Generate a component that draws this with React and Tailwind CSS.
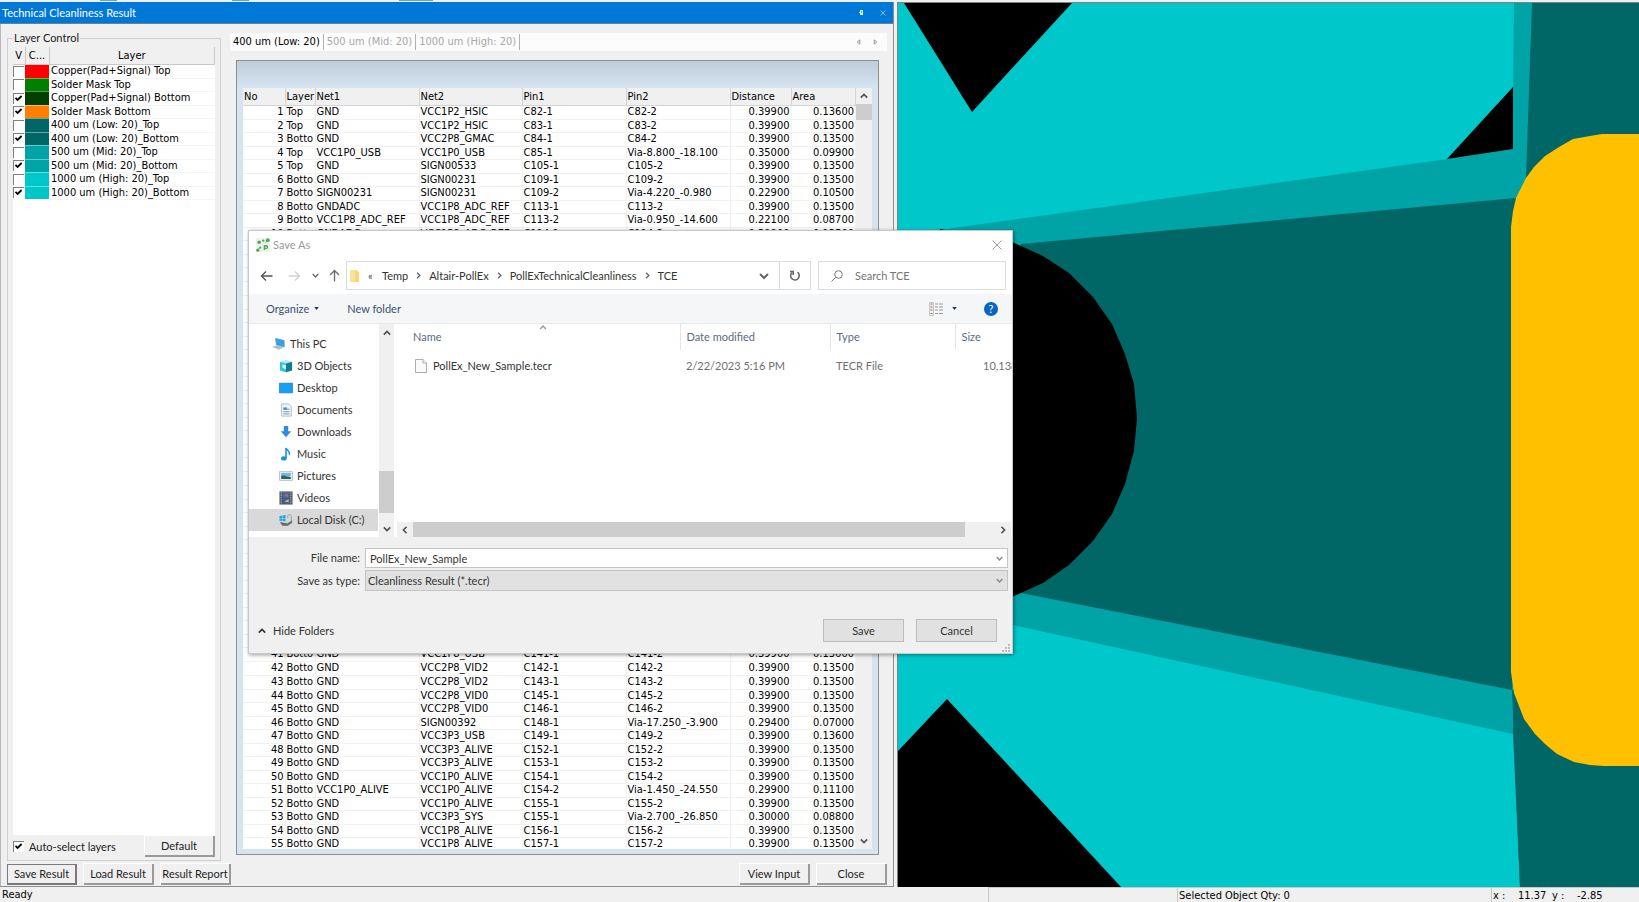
import React, { useState } from "react";
import clsx from "clsx";

const layers = [
  { name: "Copper(Pad+Signal) Top", color: "bg-[#ff0000]", on: false },
  { name: "Solder Mask Top", color: "bg-[#008000]", on: false },
  { name: "Copper(Pad+Signal) Bottom", color: "bg-[#004000]", on: true },
  { name: "Solder Mask Bottom", color: "bg-[#ff8000]", on: true },
  { name: "400 um (Low: 20)_Top", color: "bg-[#006666]", on: false },
  { name: "400 um (Low: 20)_Bottom", color: "bg-[#006666]", on: true },
  { name: "500 um (Mid: 20)_Top", color: "bg-[#00a4a6]", on: false },
  { name: "500 um (Mid: 20)_Bottom", color: "bg-[#00a4a6]", on: true },
  { name: "1000 um (High: 20)_Top", color: "bg-[#00c8ca]", on: false },
  { name: "1000 um (High: 20)_Bottom", color: "bg-[#00c8ca]", on: true },
];

const tabs = ["400 um (Low: 20)", "500 um (Mid: 20)", "1000 um (High: 20)"];

const results = {
  1: ["Top", "GND", "VCC1P2_HSIC", "C82-1", "C82-2", "0.39900", "0.13600"],
  2: ["Top", "GND", "VCC1P2_HSIC", "C83-1", "C83-2", "0.39900", "0.13500"],
  3: ["Botto", "GND", "VCC2P8_GMAC", "C84-1", "C84-2", "0.39900", "0.13500"],
  4: ["Top", "VCC1P0_USB", "VCC1P0_USB", "C85-1", "Via-8.800_-18.100", "0.35000", "0.09900"],
  5: ["Top", "GND", "SIGN00533", "C105-1", "C105-2", "0.39900", "0.13500"],
  6: ["Botto", "GND", "SIGN00231", "C109-1", "C109-2", "0.39900", "0.13500"],
  7: ["Botto", "SIGN00231", "SIGN00231", "C109-2", "Via-4.220_-0.980", "0.22900", "0.10500"],
  8: ["Botto", "GNDADC", "VCC1P8_ADC_REF", "C113-1", "C113-2", "0.39900", "0.13500"],
  9: ["Botto", "VCC1P8_ADC_REF", "VCC1P8_ADC_REF", "C113-2", "Via-0.950_-14.600", "0.22100", "0.08700"],
  10: ["Botto", "GNDADC", "VCC1P8_ADC_REF", "C114-1", "C114-2", "0.39900", "0.13500"],
  41: ["Botto", "GND", "VCC1P8_USB", "C141-1", "C141-2", "0.39900", "0.13600"],
  42: ["Botto", "GND", "VCC2P8_VID2", "C142-1", "C142-2", "0.39900", "0.13500"],
  43: ["Botto", "GND", "VCC2P8_VID2", "C143-1", "C143-2", "0.39900", "0.13500"],
  44: ["Botto", "GND", "VCC2P8_VID0", "C145-1", "C145-2", "0.39900", "0.13500"],
  45: ["Botto", "GND", "VCC2P8_VID0", "C146-1", "C146-2", "0.39900", "0.13500"],
  46: ["Botto", "GND", "SIGN00392", "C148-1", "Via-17.250_-3.900", "0.29400", "0.07000"],
  47: ["Botto", "GND", "VCC3P3_USB", "C149-1", "C149-2", "0.39900", "0.13600"],
  48: ["Botto", "GND", "VCC3P3_ALIVE", "C152-1", "C152-2", "0.39900", "0.13500"],
  49: ["Botto", "GND", "VCC3P3_ALIVE", "C153-1", "C153-2", "0.39900", "0.13500"],
  50: ["Botto", "GND", "VCC1P0_ALIVE", "C154-1", "C154-2", "0.39900", "0.13500"],
  51: ["Botto", "VCC1P0_ALIVE", "VCC1P0_ALIVE", "C154-2", "Via-1.450_-24.550", "0.29900", "0.11100"],
  52: ["Botto", "GND", "VCC1P0_ALIVE", "C155-1", "C155-2", "0.39900", "0.13500"],
  53: ["Botto", "GND", "VCC3P3_SYS", "C155-1", "Via-2.700_-26.850", "0.30000", "0.08800"],
  54: ["Botto", "GND", "VCC1P8_ALIVE", "C156-1", "C156-2", "0.39900", "0.13500"],
  55: ["Botto", "GND", "VCC1P8_ALIVE", "C157-1", "C157-2", "0.39900", "0.13500"],
};

const rowNumbers = Array.from({ length: 55 }, (_, i) => i + 1);

const Chevron = ({ dir = "down", className }) => {
  const d = {
    down: "M1 3 L5 7 L9 3",
    up: "M1 7 L5 3 L9 7",
    left: "M7 1 L3 5 L7 9",
    right: "M3 1 L7 5 L3 9",
  }[dir];
  return (
    <svg viewBox="0 0 10 10" className={className} fill="none" stroke="currentColor" strokeWidth="2">
      <path d={d} />
    </svg>
  );
};

const CheckBox = ({ id, checked, onChange, label }) => (
  <span className="grid h-[11px] w-[11px] shrink-0">
    <input
      type="checkbox"
      id={id}
      aria-label={label}
      checked={checked}
      onChange={onChange}
      className="peer col-start-1 row-start-1 h-[11px] w-[11px] appearance-none border-t border-l border-[#808080] bg-white"
    />
    <svg
      viewBox="0 0 11 11"
      className="pointer-events-none invisible col-start-1 row-start-1 peer-checked:visible"
      fill="none"
      stroke="#000"
      strokeWidth="1.8"
    >
      <path d="M2.5 4.8 L4.6 7 L8.6 3" />
    </svg>
  </span>
);

const ClassicButton = ({ children, strong }) => (
  <button
    type="button"
    className={clsx(
      "h-[21px] w-[70px] border-r-2 border-b-2 bg-[#f0f0f0] font-['Lato',sans-serif] text-[11px] leading-4 whitespace-nowrap text-[#222]",
      strong ? "border-t border-l border-[#7a7a7a]" : "border-[#9a9a9a] shadow-[-1px_-1px_0_#fff]"
    )}
  >
    {children}
  </button>
);

const LayerControl = () => {
  const [rows, setRows] = useState(layers);
  const [auto, setAuto] = useState(true);

  const toggle = (index) => {
    setRows(rows.map((r, i) => (i === index ? { ...r, on: !r.on } : r)));
  };

  return (
    <fieldset className="flex w-[214px] shrink-0 flex-col border border-[#d0d0d0] px-[5px] pt-px pb-[3px]">
      <legend className="px-px font-['Lato',sans-serif] text-[11px] leading-4 text-[#222]">Layer Control</legend>
      <div className="min-h-0 flex-1 bg-white">
        <table className="w-full table-fixed border-collapse text-[11px] leading-[13px]">
          <colgroup>
            <col className="w-3" />
            <col className="w-6" />
            <col />
          </colgroup>
          <thead>
            <tr className="h-[17px] bg-[#f0f0f0]">
              <th className="border-r border-b border-[#c8c8c8] p-0 font-normal">V</th>
              <th className="border-r border-b border-[#c8c8c8] p-0 font-normal">C...</th>
              <th className="border-r border-b border-[#c8c8c8] p-0 font-normal">Layer</th>
            </tr>
          </thead>
          <tbody>
            {rows.map((row, i) => (
              <tr key={row.name} className="odd:h-[14px] even:h-[13px]">
                <td className="p-0">
                  <CheckBox label={row.name} checked={row.on} onChange={() => toggle(i)} />
                </td>
                <td className={clsx("border-b border-white/40 p-0", row.color)}></td>
                <td className="border-b border-[#f4f4f4] p-0 pl-[2px] whitespace-nowrap">
                  <div className="h-[12px] leading-[12px]">{row.name}</div>
                </td>
              </tr>
            ))}
          </tbody>
        </table>
      </div>
      <div className="flex items-center justify-between pt-px">
        <div className="flex items-center gap-[5px]">
          <CheckBox id="auto-select" checked={auto} onChange={() => setAuto(!auto)} />
          <label htmlFor="auto-select" className="font-['Lato',sans-serif] text-[11px] leading-4 text-[#222]">
            Auto-select layers
          </label>
        </div>
        <ClassicButton>Default</ClassicButton>
      </div>
    </fieldset>
  );
};

const headers = ["No", "Layer", "Net1", "Net2", "Pin1", "Pin2", "Distance", "Area"];

const ResultTable = () => (
  <div className="flex min-h-0 flex-1 flex-col border border-[#8e8e8e] bg-[#d6e3f1] px-[6px] pb-[5px]">
    <div className="-mx-[6px] h-[27px] shrink-0 bg-linear-to-b from-[#bfcddb] to-[#d6e3f1]"></div>
    <div className="flex min-h-0 flex-1 bg-white">
      <div className="min-w-0 flex-1 overflow-hidden">
        <table className="w-full table-fixed border-collapse text-[11px] leading-[13px] text-black">
          <colgroup>
            <col className="w-[42px]" />
            <col className="w-[30px]" />
            <col className="w-[104px]" />
            <col className="w-[103px]" />
            <col className="w-[104px]" />
            <col className="w-[104px]" />
            <col className="w-[61px]" />
            <col />
          </colgroup>
          <thead>
            <tr className="h-[17px] bg-[#f0f0f0]">
              {headers.map((h) => (
                <th key={h} className="border-r border-b border-[#d4d4d4] p-0 pl-px text-left font-normal">
                  {h}
                </th>
              ))}
            </tr>
          </thead>
          <tbody>
            {rowNumbers.map((n) => (
              <tr key={n} className={n % 2 === 1 || n % 14 === 0 ? "h-[14px]" : "h-[13px]"}>
                <td className="border-r border-b border-[#f2f2f2] p-0 pr-px text-right">
                  <div className="h-[12px] leading-[12px]">{results[n] && n}</div>
                </td>
                {(results[n] || headers.slice(1)).map((cell, i) => (
                  <td
                    key={i}
                    className={clsx(
                      "border-r border-b border-[#f2f2f2] p-0 whitespace-nowrap",
                      i > 4 ? "pr-px text-right" : "pl-px"
                    )}
                  >
                    <div className="h-[12px] leading-[12px]">{results[n] && cell}</div>
                  </td>
                ))}
              </tr>
            ))}
          </tbody>
        </table>
      </div>
      <div className="flex w-4 shrink-0 flex-col items-center bg-[#f0f0f0] text-[#505050]">
        <div className="flex h-4 items-center">
          <Chevron dir="up" className="h-2 w-2" />
        </div>
        <div className="h-4 w-full bg-[#cdcdcd]"></div>
        <div className="mt-auto flex h-4 items-center">
          <Chevron className="h-2 w-2" />
        </div>
      </div>
    </div>
  </div>
);

const ResultPanel = () => (
  <section className="flex w-[894px] shrink-0 flex-col border-r border-b border-[#8e8e8e] bg-[#f0f0f0]">
    <div className="flex h-[22px] shrink-0 items-center border-b border-[#6f7f90] bg-[#0078d7] pr-[7px] pl-[2px] text-white">
      <h1 className="flex-1 font-['Lato',sans-serif] text-[11px] leading-4">Technical Cleanliness Result</h1>
      <button type="button" aria-label="Pin" className="mr-4">
        <svg viewBox="0 0 5 5" className="h-[5px] w-[5px]">
          <path d="M1 0 H4 V5 H1 V3 H0 V2 H1 Z" fill="#e6f1fb" />
          <path d="M2 1 H3 V3 H2 Z" fill="#5aa5e6" />
        </svg>
      </button>
      <button type="button" aria-label="Close panel">
        <svg viewBox="0 0 6 6" className="h-[6px] w-[6px]">
          <path d="M0.5 0.5 L5.5 5.5 M5.5 0.5 L0.5 5.5" stroke="#a9cff2" strokeWidth="0.8" />
        </svg>
      </button>
    </div>
    <div className="flex min-h-0 flex-1 flex-col gap-[3px] border-l border-[#b8b8b8] px-[6px] pt-[6px] pb-px">
      <div className="flex min-h-0 flex-1 gap-[9px]">
        <LayerControl />
        <div className="flex min-w-0 flex-1 flex-col pt-[3px] pb-[6px]">
          <div className="mb-[9px] flex h-[18px] shrink-0 items-center bg-[#fcfcfc] text-[11px] leading-4">
            {tabs.map((tab, i) => (
              <button
                key={tab}
                type="button"
                className={clsx("border-r border-[#b0b0b0] px-[3px]", i === 0 ? "text-black" : "text-[#a8a8a8]")}
              >
                {tab}
              </button>
            ))}
            <button type="button" aria-label="Previous tab" className="ml-auto">
              <svg viewBox="0 0 5 7" className="h-[6px] w-[5px]">
                <path d="M4 1 L1 3.5 L4 6 Z" fill="none" stroke="#888" />
              </svg>
            </button>
            <button type="button" aria-label="Next tab" className="mr-[9px] ml-3">
              <svg viewBox="0 0 5 7" className="h-[6px] w-[5px]">
                <path d="M1 1 L4 3.5 L1 6 Z" fill="none" stroke="#888" />
              </svg>
            </button>
          </div>
          <div className="mr-2 ml-[6px] flex min-h-0 flex-1 flex-col">
            <ResultTable />
          </div>
        </div>
      </div>
      <div className="flex gap-[7px]">
        <ClassicButton strong>Save Result</ClassicButton>
        <ClassicButton>Load Result</ClassicButton>
        <ClassicButton>Result Report</ClassicButton>
        <div className="flex-1"></div>
        <ClassicButton>View Input</ClassicButton>
        <ClassicButton>Close</ClassicButton>
      </div>
    </div>
  </section>
);

const BoardView = () => (
  <main className="ml-[3px] min-w-0 flex-1 border-t border-l border-[#808080]">
    <svg viewBox="898 3 741 884" preserveAspectRatio="xMinYMin slice" className="h-full w-full bg-[#00c8ca]">
      <polygon points="904,3 1072,3 972,112" fill="#000" />
      <polygon points="1514,3 1639,3 1639,420 1513,420 1513,87" fill="#00a4a6" />
      <polygon points="1532,3 1639,3 1639,887 1520,887 1511,690 1511,260 1526,178" fill="#006666" />
      <polygon points="898,238 953,228 1447,159 1513,149 1527,178 1513,734 1013,625 898,600" fill="#00a4a6" />
      <polygon points="1512,690 1560,690 1560,887 1520,887" fill="#006666" />
      <polygon points="1513,87 1513,149 1447,159" fill="#000" />
      <polygon points="1021,244 1516,198 1530,400 1512,690 1021,593" fill="#006666" />
      <polygon
        points="940,229 1012,242 1043,256 1069,273 1093,297 1112,324 1125,354 1134,384 1137,418 1134,451 1125,484 1112,514 1093,541 1069,565 1043,583 1012,597 940,610"
        fill="#000"
      />
      <polygon
        points="1639,134 1602,134 1590,136 1573,139 1559,147 1545,156 1534,167 1526,178 1516,198 1513,211 1511,227 1511,672 1514,693 1524,719 1535,734 1545,744 1557,754 1574,762 1590,765 1604,766 1639,766"
        fill="#ffc000"
      />
      <polygon points="898,751 947,699 1121,887 898,887" fill="#000" />
    </svg>
  </main>
);

const icons = {
  pc: (
    <>
      <path d="M4 1.5 L14 4 V11.5 L5 9 Z" fill="#2aa5ee" stroke="#5f86a5" strokeWidth="0.6" />
      <path d="M0 11.5 L5.5 9.5 L13 12 L8 14.5 Z" fill="#b3bdc7" />
    </>
  ),
  objects: (
    <>
      <path d="M1 3 L8 1 L15 3 L8 5 Z" fill="#a8eef2" />
      <path d="M1 3 L8 5 V15 L1 13 Z" fill="#36c3cf" />
      <path d="M15 3 L8 5 V15 L15 13 Z" fill="#0c8193" />
      <path d="M4 6 L8 7 V12 L4 10 Z" fill="#d9fafa" />
    </>
  ),
  desktop: <path d="M0.5 2.5 H15.5 V13.5 H0.5 Z" fill="#12a0f8" stroke="#1178c4" strokeWidth="0.8" />,
  documents: (
    <>
      <path d="M3 1 H11 L14 4 V15 H3 Z" fill="#f2f5f7" stroke="#9aa7b0" strokeWidth="0.8" />
      <path d="M5 5 H9 V8 H5 Z" fill="#3a94d6" />
      <path d="M9 7 H12 M5 10 H12 M5 12.5 H12" stroke="#6d8ca3" />
    </>
  ),
  downloads: <path d="M5.5 1 H10.5 V7 H14 L8 14 L2 7 H5.5 Z" fill="#2f8de0" />,
  music: (
    <>
      <ellipse cx="5.5" cy="13" rx="3.2" ry="2.4" fill="#1590e8" />
      <path d="M8 13 V1 C9 4 13 4.5 12 9" fill="none" stroke="#1590e8" strokeWidth="1.8" />
    </>
  ),
  pictures: (
    <>
      <path d="M0.5 3 H15.5 V13 H0.5 Z" fill="#e9eff4" stroke="#a3adb5" strokeWidth="0.8" />
      <path d="M2.5 4.5 H13.5 V8 H2.5 Z" fill="#6fb7ec" />
      <path d="M2.5 8 C6 6.5 9 9 13.5 9 V11.5 H2.5 Z" fill="#29655e" />
    </>
  ),
  videos: (
    <>
      <path d="M0.5 0.5 H15.5 V15.5 H0.5 Z" fill="#55595e" />
      <path d="M2.5 1.5 V15 M13.5 1.5 V15" stroke="#c9ccd0" strokeDasharray="1.4 1.2" />
      <path d="M4.5 1.5 H11.5 V7.5 H4.5 Z" fill="#2f6fd0" />
      <path d="M4.5 8.5 H11.5 V14.5 H4.5 Z" fill="#315fa8" />
      <path d="M6 5 L10 2.5 V7 Z" fill="#d8602c" />
      <path d="M6 12 L11 9 V13 Z" fill="#e3b23a" />
    </>
  ),
  disk: (
    <>
      <path d="M0.5 3.5 L3.6 3 V5.8 H0.5 Z M4.2 2.9 L7.5 2.4 V5.8 H4.2 Z M0.5 6.4 H3.6 V9.2 L0.5 8.8 Z M4.2 6.4 H7.5 V9.7 L4.2 9.2 Z" fill="#17a9e8" />
      <path d="M1 10.5 H10 L15 8 V11 L10 14.5 H4 Z" fill="#63696e" />
      <path d="M3 10.5 L8.5 9 H14 L9.5 12 Z" fill="#cfd3d6" />
      <path d="M10 6 V4 C10 1 14 1 14 4 V9" fill="none" stroke="#a6acb1" strokeWidth="1.3" />
    </>
  ),
};

const folders = [
  { name: "This PC", icon: "pc", root: true },
  { name: "3D Objects", icon: "objects" },
  { name: "Desktop", icon: "desktop" },
  { name: "Documents", icon: "documents" },
  { name: "Downloads", icon: "downloads" },
  { name: "Music", icon: "music" },
  { name: "Pictures", icon: "pictures" },
  { name: "Videos", icon: "videos" },
  { name: "Local Disk (C:)", icon: "disk", selected: true },
];

const path = ["Temp", "Altair-PollEx", "PollExTechnicalCleanliness", "TCE"];

const NavBar = () => (
  <div className="flex h-[29px] shrink-0 items-center px-[6px] text-[#6a6a6a]">
    <button type="button" aria-label="Back" className="ml-[5px]">
      <svg viewBox="0 0 13 12" className="h-3 w-[13px]" fill="none" stroke="#5a5a5a" strokeWidth="1.5">
        <path d="M12.5 6 H1.5 M6 1.5 L1.5 6 L6 10.5" />
      </svg>
    </button>
    <button type="button" aria-label="Forward" className="ml-[15px]">
      <svg viewBox="0 0 13 12" className="h-3 w-[13px]" fill="none" stroke="#d2d2d2" strokeWidth="1.4">
        <path d="M0.5 6 H11.5 M7 1.5 L11.5 6 L7 10.5" />
      </svg>
    </button>
    <button type="button" aria-label="Recent locations" className="ml-[11px]">
      <Chevron className="h-[7px] w-[7px]" />
    </button>
    <button type="button" aria-label="Up" className="ml-[10px]">
      <svg viewBox="0 0 11 13" className="h-[13px] w-[11px]" fill="none" stroke="#707070" strokeWidth="1.4">
        <path d="M5.5 12.5 V1.5 M1 6 L5.5 1.5 L10 6" />
      </svg>
    </button>
    <div className="ml-[6px] flex h-full w-[465px] items-center border border-[#dcdcdc] text-[#333]">
      <svg viewBox="0 0 9 13" className="ml-[3px] h-[13px] w-[9px]">
        <path d="M0 1 H6 L9 3 V13 H0 Z" fill="#f8d775" />
        <path d="M0 1 H5 V12 L0 13 Z" fill="#fbe29a" />
      </svg>
      <span className="ml-[9px] w-3 text-[#555]">«</span>
      <nav className="flex flex-1 items-center gap-[7px] pl-[2px]">
        {path.map((p, i) => (
          <React.Fragment key={p}>
            {i > 0 && <Chevron dir="right" className="h-[7px] w-[7px] text-[#666]" />}
            <a href={"#" + p}>{p}</a>
          </React.Fragment>
        ))}
      </nav>
      <button type="button" aria-label="Address history" className="mr-[10px]">
        <Chevron className="h-[10px] w-[10px] text-[#666]" />
      </button>
      <button
        type="button"
        aria-label="Refresh"
        className="flex h-full w-[31px] items-center justify-center border-l border-[#dcdcdc]"
      >
        <svg viewBox="0 0 12 12" className="h-3 w-3" fill="none" stroke="#666" strokeWidth="1.6">
          <path d="M3 2.5 A4.3 4.3 0 1 0 8.5 2.2" />
          <path d="M1 1.5 H4.2 V5" />
        </svg>
      </button>
    </div>
    <label className="ml-[7px] flex h-full min-w-0 flex-1 items-center border border-[#dcdcdc]">
      <svg viewBox="0 0 12 12" className="ml-3 h-3 w-3 shrink-0" fill="none" stroke="#777">
        <circle cx="7.5" cy="4.5" r="3.8" />
        <path d="M4.8 7.2 L0.5 11.5" />
      </svg>
      <input
        type="text"
        aria-label="Search TCE"
        placeholder="Search TCE"
        className="ml-3 w-full min-w-0 bg-transparent outline-none placeholder:text-[#757575]"
      />
    </label>
  </div>
);

const FolderTree = () => (
  <div className="flex w-[145px] shrink-0">
    <ul className="min-w-0 flex-1 pt-[9px]">
      {folders.map((f) => (
        <li key={f.name}>
          <button
            type="button"
            className={clsx(
              "flex h-[22px] w-[129px] items-center gap-1 whitespace-nowrap",
              f.root ? "pl-[23px]" : "pl-[30px]",
              f.selected && "bg-[#d9d9d9]"
            )}
          >
            <svg viewBox="0 0 16 16" className="h-[14px] w-[14px] shrink-0">
              {icons[f.icon]}
            </svg>
            {f.name}
          </button>
        </li>
      ))}
    </ul>
    <div className="flex w-[15px] flex-col items-center bg-[#f0f0f0] text-[#505050]">
      <div className="flex h-[18px] items-center">
        <Chevron dir="up" className="h-2 w-2" />
      </div>
      <div className="flex-1"></div>
      <div className="h-[42px] w-full bg-[#cdcdcd]"></div>
      <div className="mt-2 flex h-4 items-center">
        <Chevron className="h-2 w-2" />
      </div>
    </div>
  </div>
);

const FileList = () => (
  <div className="ml-[2px] flex min-w-0 flex-1 flex-col overflow-hidden">
    <div className="min-h-0 flex-1 overflow-hidden">
      <table className="w-[660px] table-fixed border-collapse text-left">
        <colgroup>
          <col className="w-[284px]" />
          <col className="w-[150px]" />
          <col className="w-[125px]" />
          <col />
        </colgroup>
        <thead>
          <tr className="h-[26px] text-[#5a6b80]">
            <th className="relative border-r border-[#e5e5e5] p-0 pl-[17px] font-normal">
              Name
              <Chevron dir="up" className="absolute top-0 left-[143px] h-[7px] w-[8px] text-[#9a9a9a]" />
            </th>
            <th className="border-r border-[#e5e5e5] p-0 pl-[6px] font-normal">Date modified</th>
            <th className="border-r border-[#e5e5e5] p-0 pl-[6px] font-normal">Type</th>
            <th className="p-0 pl-[6px] font-normal">Size</th>
          </tr>
        </thead>
        <tbody>
          <tr className="h-[32px] text-[#6f6f6f]">
            <td className="p-0 pl-[19px] text-[#333]">
              <div className="flex items-center gap-[6px]">
                <svg viewBox="0 0 12 14" className="h-[14px] w-3" fill="#fafafa" stroke="#a5a5a5" strokeWidth="0.9">
                  <path d="M0.5 0.5 H8 L11.5 4 V13.5 H0.5 Z" />
                  <path d="M8 0.5 V4 H11.5" />
                </svg>
                PollEx_New_Sample.tecr
              </div>
            </td>
            <td className="p-0 pl-[6px]">2/22/2023 5:16 PM</td>
            <td className="p-0 pl-[6px]">TECR File</td>
            <td className="p-0 pl-7">10,138</td>
          </tr>
        </tbody>
      </table>
    </div>
    <div className="mr-px ml-px flex h-[15px] shrink-0 items-center bg-[#f0f0f0] text-[#505050]">
      <Chevron dir="left" className="mx-1 h-2 w-2" />
      <div className="h-full flex-1 bg-[#cdcdcd]"></div>
      <Chevron dir="right" className="mr-1 ml-[34px] h-2 w-2" />
    </div>
  </div>
);

const DialogButton = ({ children }) => (
  <button type="button" className="h-[23px] w-[81px] border border-[#bcbcbc] bg-[#e1e1e1] text-[#333]">
    {children}
  </button>
);

const SaveAsDialog = () => {
  const [fileName, setFileName] = useState("PollEx_New_Sample");

  return (
    <div
      role="dialog"
      aria-label="Save As"
      className="absolute top-[230px] left-[248px] flex h-[424px] w-[765px] flex-col border border-[#c8c8c8] bg-white font-['Lato','Open_Sans',sans-serif] text-[11px] leading-4 text-[#333] shadow-[1px_1px_4px_rgba(0,0,0,0.4)]"
    >
      <div className="flex h-[28px] shrink-0 items-center pr-[10px] pl-[7px] text-[#999]">
        <svg viewBox="0 0 14 14" className="mr-[3px] h-[14px] w-[14px]">
          <path d="M0 0 H14 V14 H0 Z" fill="#eef2ee" />
          <circle cx="3.2" cy="4.2" r="1.8" fill="#4cab50" />
          <circle cx="7.2" cy="2.6" r="1.2" fill="#4cab50" />
          <circle cx="11.8" cy="2.2" r="1.9" fill="#4cab50" />
          <circle cx="1.8" cy="12.2" r="1.6" fill="#4cab50" />
          <circle cx="4.2" cy="9.6" r="1.1" fill="#4cab50" />
          <path d="M1.8 12.2 L4.2 9.6 M9.5 4.5 L11.5 2.5" stroke="#4cab50" />
          <path d="M8.4 12 V7.8 H10.2 A1.3 1.3 0 0 1 10.2 10.4 H8.4" fill="none" stroke="#4cab50" strokeWidth="1.4" />
        </svg>
        <h2 className="flex-1">Save As</h2>
        <button type="button" aria-label="Close dialog">
          <svg viewBox="0 0 10 10" className="h-[10px] w-[10px]">
            <path d="M0.5 0.5 L9.5 9.5 M9.5 0.5 L0.5 9.5" stroke="#999" />
          </svg>
        </button>
      </div>
      <div className="mt-[2px] shrink-0">
        <NavBar />
      </div>
      <div className="mt-1 flex h-[30px] shrink-0 items-center border-b border-[#e8eaec] bg-[#f5f6f7] pr-[14px] pl-[17px] text-[#3b4f72]">
        <button type="button" className="flex items-center gap-[5px]">
          Organize
          <svg viewBox="0 0 6 4" className="h-[3px] w-[5px]">
            <path d="M0 0 H6 L3 4 Z" fill="#1e3560" />
          </svg>
        </button>
        <button type="button" className="ml-7">
          New folder
        </button>
        <button type="button" aria-label="Change view" className="ml-auto flex items-center gap-[9px]">
          <svg viewBox="0 0 14 14" className="h-[14px] w-[14px]">
            <path d="M0.5 0.5 H4.5 V13.5 H0.5 Z" fill="#ececec" stroke="#b5b5b5" strokeWidth="0.7" />
            <path d="M1.5 2 H3.5 M1.5 5 H3.5 M1.5 8 H3.5 M1.5 11.5 H3.5" stroke="#a56f68" />
            <path d="M6 2 H9 M10 2 H14 M6 5 H9 M10 5 H14 M6 8 H9 M10 8 H14 M6 11.5 H9 M10 11.5 H14" stroke="#999" />
          </svg>
          <svg viewBox="0 0 6 4" className="h-[3px] w-[5px]">
            <path d="M0 0 H6 L3 4 Z" fill="#1e3560" />
          </svg>
        </button>
        <button
          type="button"
          aria-label="Help"
          className="ml-[27px] h-[14px] w-[14px] rounded-full bg-[#0a64c2] text-center text-[11px] leading-[14px] text-white"
        >
          ?
        </button>
      </div>
      <div className="flex h-[213px] shrink-0">
        <FolderTree />
        <FileList />
      </div>
      <form className="relative flex min-h-0 flex-1 flex-col bg-[#f0f0f0] pt-[11px]" onSubmit={(e) => e.preventDefault()}>
        <div className="flex items-center gap-[5px] pr-1">
          <label htmlFor="file-name" className="w-[111px] text-right">
            File name:
          </label>
          <div className="relative flex-1">
            <input
              id="file-name"
              type="text"
              value={fileName}
              onChange={(e) => setFileName(e.target.value)}
              className="block h-[20px] w-full border border-[#c4c4c4] bg-white px-1 outline-none"
            />
            <Chevron className="pointer-events-none absolute top-[7px] right-[5px] h-[7px] w-[7px] text-[#888]" />
          </div>
        </div>
        <div className="mt-[2px] flex items-center gap-[5px] pr-1">
          <label htmlFor="file-type" className="w-[111px] text-right">
            Save as type:
          </label>
          <div className="relative flex-1">
            <select
              id="file-type"
              className="block h-[21px] w-full appearance-none border border-[#c4c4c4] bg-[#e1e1e1] px-[2px] leading-4 outline-none"
            >
              <option>Cleanliness Result (*.tecr)</option>
            </select>
            <Chevron className="pointer-events-none absolute top-[7px] right-[5px] h-[7px] w-[7px] text-[#888]" />
          </div>
        </div>
        <div className="mt-7 flex items-center gap-3 pr-[15px] pl-[9px]">
          <button type="button" className="mr-auto flex items-center gap-[7px]">
            <Chevron dir="up" className="h-2 w-2" />
            Hide Folders
          </button>
          <DialogButton>Save</DialogButton>
          <DialogButton>Cancel</DialogButton>
        </div>
        <svg viewBox="0 0 8 8" className="absolute right-[2px] bottom-px h-2 w-2" fill="#bdbdbd">
          <path d="M6 0h2v2h-2z M6 3h2v2h-2z M6 6h2v2h-2z M3 3h2v2h-2z M3 6h2v2h-2z M0 6h2v2h-2z" />
        </svg>
      </form>
    </div>
  );
};

const StatusBar = () => (
  <footer className="flex h-[15px] shrink-0 items-start bg-[#f0f0f0] text-[11px] leading-4">
    <div className="flex-1 pl-[2px]">Ready</div>
    <div className="h-full w-[189px] border-t border-l border-[#c8c8c8]"></div>
    <div className="h-full w-[314px] border-t border-l border-[#c8c8c8] pl-px">Selected Object Qty: 0</div>
    <div className="flex h-full w-[148px] border-t border-l border-[#c8c8c8] pl-px">
      <span className="w-[25px]">x :</span>
      <span className="w-[34px]">11.37</span>
      <span className="w-[25px]">y :</span>
      <span>-2.85</span>
    </div>
  </footer>
);

const App = () => (
  <div className="relative flex h-screen flex-col overflow-hidden bg-[#f0f0f0] font-['DejaVu_Sans_Condensed','DejaVu_Sans',sans-serif] text-black">
    <div className="flex h-[2px] shrink-0">
      <div className="ml-[100px] h-px w-[17px] bg-[#5aa5e6]"></div>
      <div className="ml-[115px] h-px w-[17px] bg-[#5aa5e6]"></div>
      <div className="ml-[150px] h-px w-[34px] bg-[#5aa5e6]"></div>
    </div>
    <div className="flex min-h-0 flex-1">
      <ResultPanel />
      <BoardView />
    </div>
    <StatusBar />
    <SaveAsDialog />
  </div>
);

export default App;
